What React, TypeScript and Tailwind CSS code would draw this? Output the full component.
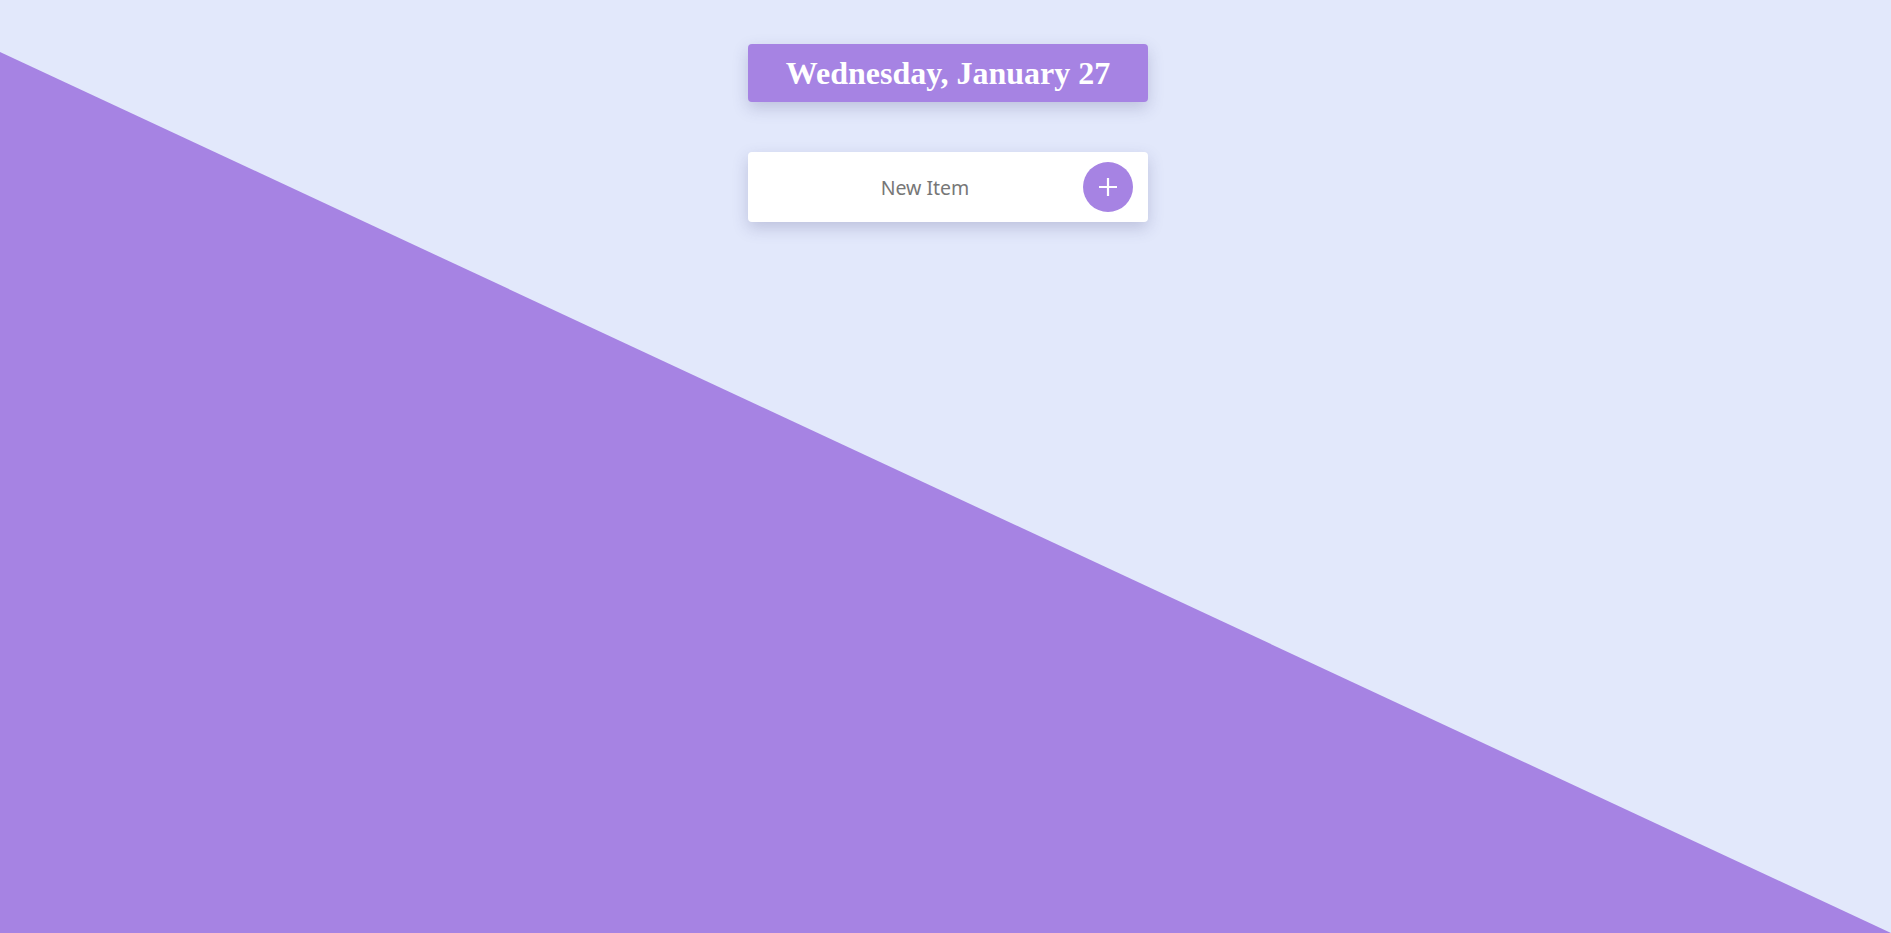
import React, { useState } from 'react'

export default function App() {
  const [item, setItem] = useState('')

  return (
    <div className="relative min-h-screen h-[933px] overflow-hidden bg-[#e2e8fb]">
      <svg className="absolute inset-0 w-full h-full" viewBox="0 0 1891 933" preserveAspectRatio="none">
        <polygon points="0,52 1891,933 0,933" fill="#a683e3" />
      </svg>

      <div className="relative flex flex-col items-center pt-[44px] pl-[5px]">
        <div className="w-[400px] h-[58px] flex items-center justify-center rounded bg-[#a683e3] shadow-[0_6px_16px_rgba(60,60,120,0.22)]">
          <h1 className="text-white font-bold text-[32px] leading-none font-['Liberation_Serif',serif]">
            Wednesday, January 27
          </h1>
        </div>

        <form
          onSubmit={(e) => { e.preventDefault(); setItem('') }}
          className="mt-[50px] w-[400px] h-[70px] flex items-center px-[15px] rounded bg-white shadow-[0_6px_16px_rgba(60,60,120,0.22)]"
        >
          <input
            value={item}
            onChange={(e) => setItem(e.target.value)}
            placeholder="New Item"
            className="flex-1 min-w-0 pl-1 pt-[2px] text-center text-[19.5px] text-[#777] placeholder:text-[#777] outline-none font-['Noto_Sans',sans-serif]"
          />
          <button type="submit" className="w-[50px] h-[50px] rounded-full bg-[#a683e3] flex items-center justify-center shrink-0">
            <svg width="20" height="20" viewBox="0 0 20 20">
              <path d="M10 1v18M1 10h18" stroke="white" strokeWidth="2.2" />
            </svg>
          </button>
        </form>
      </div>
    </div>
  )
}
